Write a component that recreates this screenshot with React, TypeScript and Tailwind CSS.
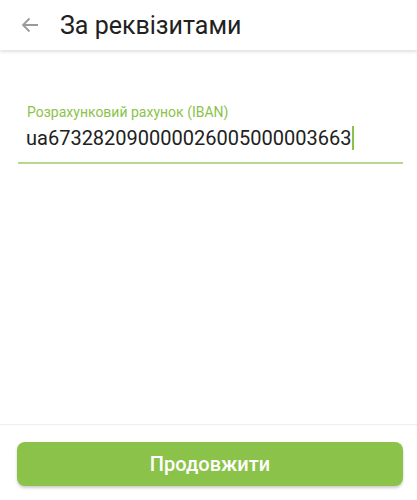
export default function App() {
  return (
    <div
      className="w-[417px] h-[500px] bg-white flex flex-col overflow-hidden"
      style={{ fontFamily: "Roboto, 'Noto Sans', sans-serif" }}
    >
      {/* Toolbar */}
      <div className="h-[50px] flex items-center shadow-[0_2px_3px_rgba(0,0,0,0.12)] relative z-10">
        <svg width="18" height="16" viewBox="0 0 18 16" className="ml-[21px] text-[#9a9a9a]">
          <path d="M17 8H2M8.5 1.5L2 8l6.5 6.5" fill="none" stroke="currentColor" strokeWidth="1.8" />
        </svg>
        <h1 className="ml-[21px] text-[25px] text-[#212121] leading-none">За реквізитами</h1>
      </div>

      {/* Form */}
      <div className="flex-1 pl-[18px] pr-[14px] pt-[53px]">
        <label className="block ml-[9px] text-[14px] text-[#8bc34a] leading-[18px]">
          Розрахунковий рахунок (IBAN)
        </label>
        <div className="flex items-center ml-[8px] mt-[4px] h-[26px]">
          <span className="text-[20px] text-[#212121] leading-none">ua673282090000026005000003663</span>
          <span className="w-[2px] h-[24px] bg-[#8bc34a] ml-[1px]" />
        </div>
        <div className="mt-[11px] h-[2px] bg-[#b5d98e]" />
      </div>

      {/* Footer */}
      <div className="border-t border-[#eeeeee] pl-[17px] pr-[14px] pt-[17px] pb-[14px]">
        <button className="w-full h-[44px] rounded-[8px] bg-[#8bc34a] text-white text-[20px] font-medium shadow-[0_2px_3px_rgba(0,0,0,0.2)]">
          Продовжити
        </button>
      </div>
    </div>
  );
}
